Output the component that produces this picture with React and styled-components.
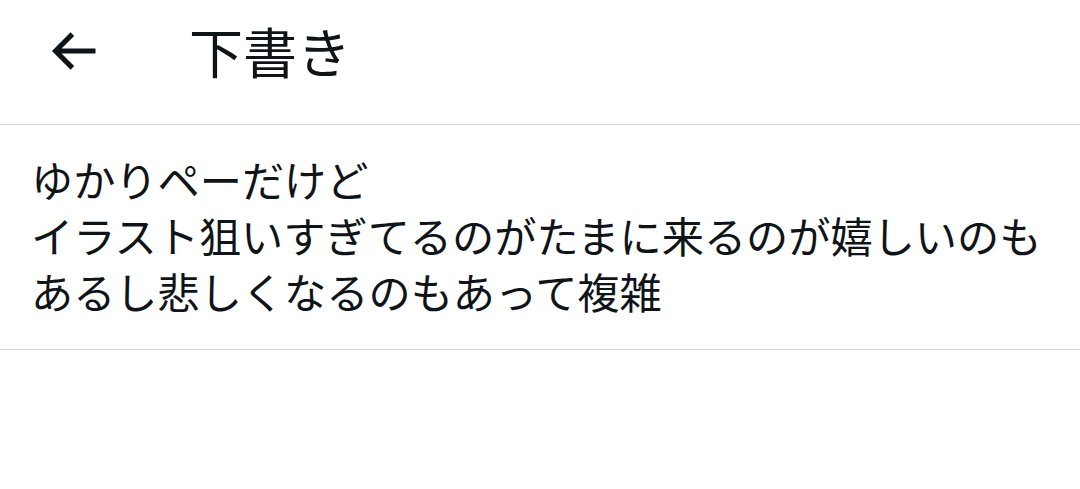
import React from "react";
import styled, { createGlobalStyle } from "styled-components";

const GlobalStyle = createGlobalStyle`
  html, body {
    margin: 0;
    padding: 0;
    background: #ffffff;
  }
  body {
    font-family: "Noto Sans CJK JP", "Noto Sans", sans-serif;
    color: #0f1419;
  }
`;

const Page = styled.div`
  width: 1080px;
  min-height: 489px;
  background: #ffffff;
`;

const Header = styled.header`
  height: 102px;
  padding-bottom: 22px;
  display: flex;
  align-items: center;
  border-bottom: 1px solid #cfd9de;
`;

const BackButton = styled.button`
  width: 60px;
  height: 60px;
  margin-left: 43px;
  padding: 0;
  border: none;
  background: transparent;
  display: flex;
  align-items: center;
  justify-content: center;
  color: #0f1419;
  cursor: pointer;
`;

const Title = styled.h1`
  margin: 0 0 0 86px;
  font-size: 54px;
  font-weight: 400;
  line-height: 1;
  color: #0f1419;
`;

const DraftItem = styled.div`
  padding: 26px 30px 30px 31px;
  border-bottom: 1px solid #cfd9de;
`;

const DraftText = styled.p`
  margin: 0;
  font-size: 42.2px;
  line-height: 56px;
  white-space: pre-wrap;
  color: #0f1419;
`;

const BackArrow = () => (
  <svg width="60" height="60" viewBox="0 0 24 24" fill="currentColor">
    <path d="M7.414 13l5.043 5.04-1.414 1.42L3.586 12l7.457-7.46 1.414 1.42L7.414 11H21v2H7.414z" />
  </svg>
);

export default function App() {
  return (
    <Page>
      <GlobalStyle />
      <Header>
        <BackButton aria-label="戻る">
          <BackArrow />
        </BackButton>
        <Title>下書き</Title>
      </Header>
      <DraftItem>
        <DraftText>
          {"ゆかりペーだけど\nイラスト狙いすぎてるのがたまに来るのが嬉しいのも\nあるし悲しくなるのもあって複雑"}
        </DraftText>
      </DraftItem>
    </Page>
  );
}
